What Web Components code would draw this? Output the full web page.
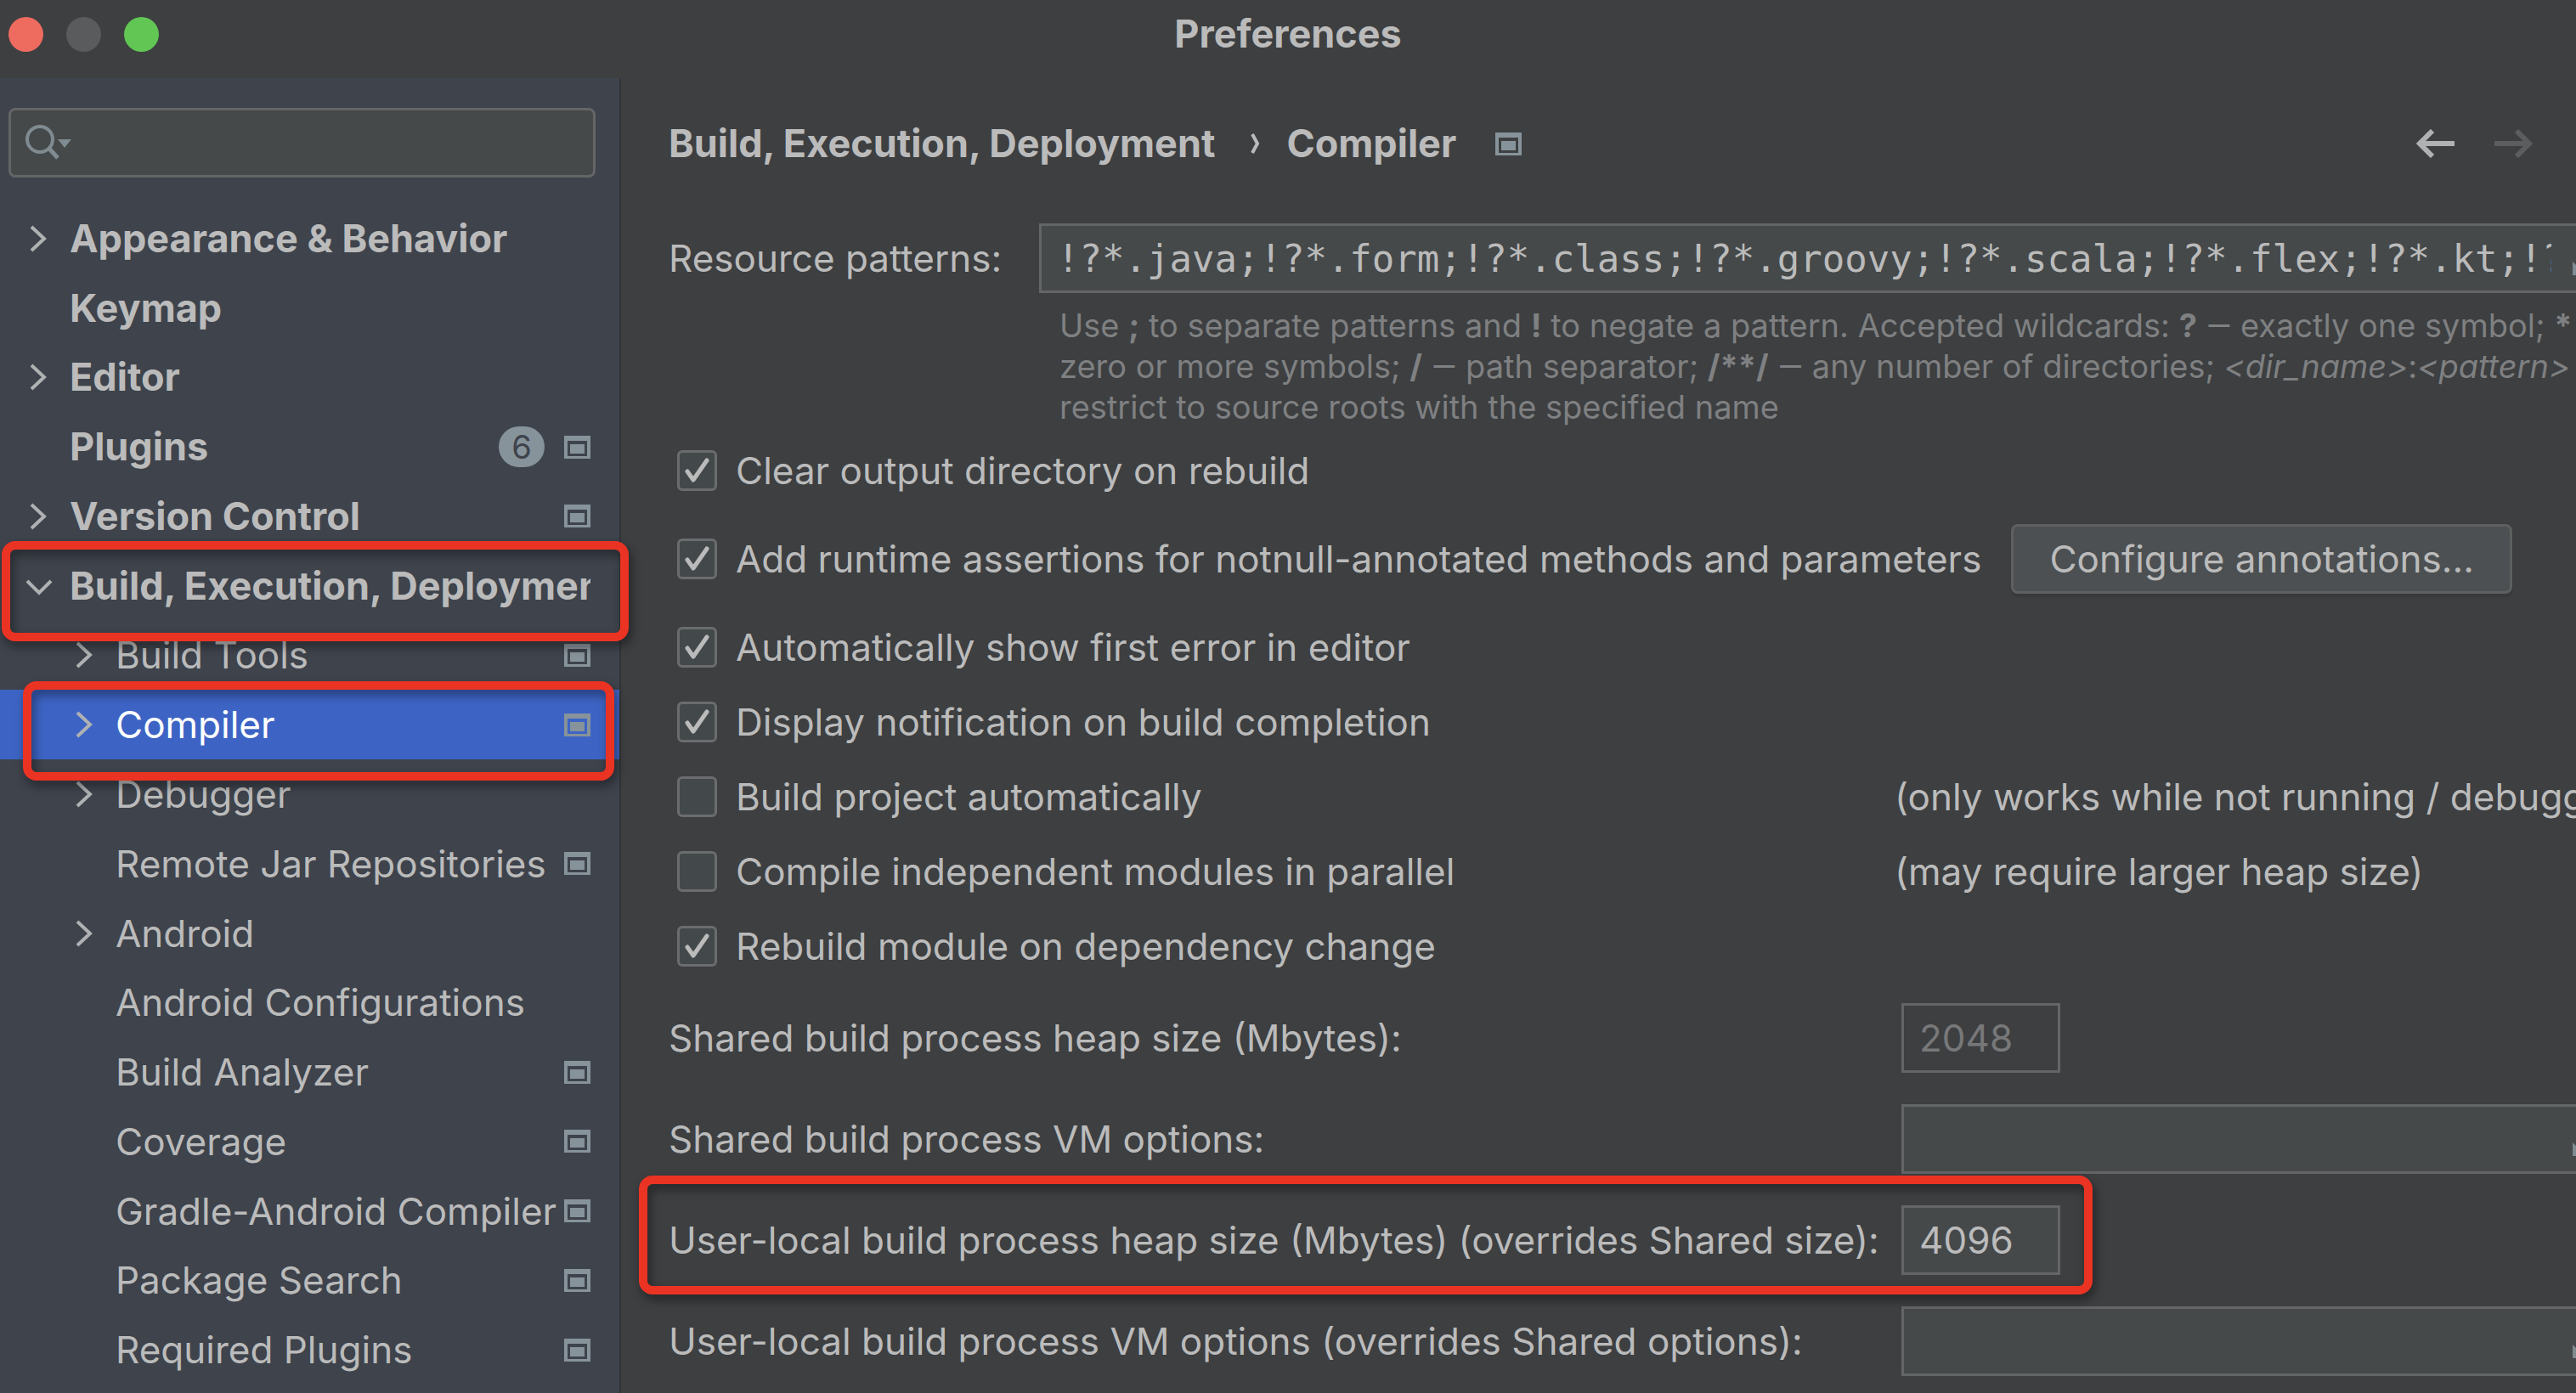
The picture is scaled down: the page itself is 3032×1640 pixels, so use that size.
<!DOCTYPE html>
<html lang="en">
<head>
<meta charset="utf-8">
<title>Preferences</title>
<style>
html, body { margin: 0; height: 100%; overflow: hidden; background: #3d3f41; }
body { font-family: Inter, "Noto Sans", sans-serif; font-size: 44px; line-height: 52px; color: #bbbbbb; }
.dash { font-family: Roboto, sans-serif; line-height: 0; }
</style>
</head>
<body>
<preferences-window>
  <title-bar slot="title">Preferences</title-bar>
  <settings-tree slot="sidebar">
    <tree-item arrow="closed" top>Appearance &amp; Behavior</tree-item>
    <tree-item top>Keymap</tree-item>
    <tree-item arrow="closed" top>Editor</tree-item>
    <tree-item top project badge="6">Plugins</tree-item>
    <tree-item arrow="closed" top project>Version Control</tree-item>
    <tree-item arrow="open" top>Build, Execution, Deployment<highlight-frame slot="frame" style="--inset: -12px -11px -24px 2px"></highlight-frame></tree-item>
    <tree-item arrow="closed" project>Build Tools</tree-item>
    <tree-item arrow="closed" project selected>Compiler<highlight-frame slot="frame" style="--inset: -10px 6px -25px 27px"></highlight-frame></tree-item>
    <tree-item arrow="closed">Debugger</tree-item>
    <tree-item project>Remote Jar Repositories</tree-item>
    <tree-item arrow="closed">Android</tree-item>
    <tree-item>Android Configurations</tree-item>
    <tree-item project>Build Analyzer</tree-item>
    <tree-item project>Coverage</tree-item>
    <tree-item project>Gradle-Android Compiler</tree-item>
    <tree-item project>Package Search</tree-item>
    <tree-item project>Required Plugins</tree-item>
  </settings-tree>
  <page-header>
    <span slot="group">Build, Execution, Deployment</span>
    <span slot="page">Compiler</span>
  </page-header>
  <pattern-field label="Resource patterns:" value="!?*.java;!?*.form;!?*.class;!?*.groovy;!?*.scala;!?*.flex;!?*.kt;!?">
    Use <b>;</b> to separate patterns and <b>!</b> to negate a pattern. Accepted wildcards: <b>?</b> <span class="dash">—</span> exactly one symbol; <b>*</b><br>
    zero or more symbols; <b>/</b> <span class="dash">—</span> path separator; <b>/**/</b> <span class="dash">—</span> any number of directories; <i>&lt;dir_name&gt;</i>:<i>&lt;pattern&gt;</i> <span class="dash">—</span><br>
    restrict to source roots with the specified name
  </pattern-field>
  <check-row label="Clear output directory on rebuild" checked></check-row>
  <check-row label="Add runtime assertions for notnull-annotated methods and parameters" action="Configure annotations..." checked></check-row>
  <check-row label="Automatically show first error in editor" checked></check-row>
  <check-row label="Display notification on build completion" checked></check-row>
  <check-row label="Build project automatically" note="(only works while not running / debugging)"></check-row>
  <check-row label="Compile independent modules in parallel" note="(may require larger heap size)"></check-row>
  <check-row label="Rebuild module on dependency change" checked></check-row>
  <option-group>
    <option-row label="Shared build process heap size (Mbytes):" value="2048" size="short" disabled></option-row>
    <option-row label="Shared build process VM options:"></option-row>
    <option-row label="User-local build process heap size (Mbytes) (overrides Shared size):" value="4096" size="short"><highlight-frame style="--inset: -16px auto -5px -35px; --frame-width: 1711px"></highlight-frame></option-row>
    <option-row label="User-local build process VM options (overrides Shared options):"></option-row>
  </option-group>
</preferences-window>

<script>
const define = (name, render) => customElements.define(name, class extends HTMLElement {
  connectedCallback() {
    if (this.shadowRoot) return;
    this.attachShadow({ mode: "open" }).innerHTML = "<style>:host,*{box-sizing:border-box}</style>" + render(this);
  }
});
const attr = (el, name) => (el.getAttribute(name) || "").replace(/&/g, "&amp;").replace(/"/g, "&quot;");

const fieldStyle = `
  .box { display: flex; align-items: center; height: 82px; border: 3px solid #646566; background: #45494a; }
  input { flex: 1; min-width: 0; width: 0; height: 100%; margin: 0; padding: 0 0 0 18px; border: 0; outline: 0; background: none; color: #bbbbbb; font: inherit; }
  .grow { flex: none; width: 34px; height: 40px; margin: 0 11px 0 25px; padding: 0; border: 0; background: none; color: #7f8b91; }
  .grow svg { display: block; }`;
const expandButton = `<button class="grow" aria-label="Expand"><svg width="34" height="40" viewBox="0 0 34 40" fill="currentColor"><path d="M0 24L16 40H0ZM18 0H34V16Z"/></svg></button>`;

define("preferences-window", () => `
<style>
  :host { display: flex; flex-direction: column; height: 100vh; overflow: hidden; }
  .body { display: flex; flex: 1; min-height: 0; }
  main { flex: 1; min-width: 0; padding-left: 56px; }
</style>
<slot name="title"></slot>
<div class="body"><slot name="sidebar"></slot><main><slot></slot></main></div>`);

define("title-bar", () => `
<style>
  :host { display: grid; grid-template-columns: 1fr auto 1fr; align-items: center; flex: none; height: 92px; padding: 0 10px 12px; font-size: 45px; font-weight: 700; }
  div { display: flex; gap: 27px; }
  button { width: 41px; height: 41px; padding: 0; border: 0; border-radius: 50%; }
  .close { background: #ee6b5f; } .min { background: #5a5b5d; } .zoom { background: #61c654; }
</style>
<div><button class="close" aria-label="Close"></button><button class="min" aria-label="Minimize" disabled></button><button class="zoom" aria-label="Zoom"></button></div>
<slot></slot>`);

define("settings-tree", () => `
<style>
  :host { display: flex; flex-direction: column; flex: none; width: 731px; border-right: 2px solid #333436; background: #3e434c; }
  label { display: flex; align-items: center; flex: none; height: 82px; margin: 35px 28px 31px 10px; padding-left: 16px; border: 3px solid #646566; border-radius: 8px; background: #45494a; }
  input { flex: 1; min-width: 0; border: 0; outline: 0; background: none; color: inherit; font: inherit; }
  nav { display: grid; grid-template-columns: minmax(0, 1fr); grid-auto-rows: 1fr; flex: 1; min-height: 0; padding-bottom: 10px; }
</style>
<label><svg width="58" height="44" viewBox="0 0 58 44" fill="none" stroke="#7f8b91" stroke-width="4"><circle cx="18" cy="18" r="15"/><path d="M29 29L39 40" stroke-width="5"/><path d="M39 18H55L47 28Z" fill="#7f8b91" stroke="none"/></svg><input type="text" aria-label="Search settings"></label>
<nav><slot></slot></nav>`);

define("project-icon", () => `
<style>:host { display: block; flex: none; } svg { display: block; }</style>
<svg width="31" height="27" viewBox="0 0 31 27" fill="#87939a"><path fill-rule="evenodd" d="M0 0H31V27H0ZM4 6V24H27V6Z"/><rect x="7" y="10" width="17" height="11"/></svg>`);

const arrows = {
  closed: `<path d="M9 12L24 26L9 40"/>`,
  open: `<path d="M4 20L18 34L32 20"/>`
};
define("tree-item", el => `
<style>
  :host { display: block; position: relative; min-height: 0; }
  a { display: flex; align-items: center; height: 100%; padding: 0 34px 0 82px; color: inherit; text-decoration: none; white-space: nowrap; }
  :host([top]) a { padding-left: 28px; font-size: 45px; font-weight: 700; }
  :host([selected]) a { background: #3d64c4; color: #ffffff; }
  .arrow { flex: none; width: 54px; height: 52px; }
  .text { flex: 1; min-width: 0; overflow: hidden; }
  .badge { flex: none; width: 54px; height: 48px; margin-right: 23px; border-radius: 24px; background: #87939a; color: #3e434c; font-size: 38px; line-height: 48px; font-weight: 400; text-align: center; }
</style>
<a href="#"><svg class="arrow" viewBox="0 0 54 52" fill="none" stroke="#afb1b3" stroke-width="4">${arrows[el.getAttribute("arrow")] || ""}</svg><span class="text"><slot></slot></span>${el.hasAttribute("badge") ? `<span class="badge">${attr(el, "badge")}</span>` : ""}${el.hasAttribute("project") ? "<project-icon></project-icon>" : ""}</a>
<slot name="frame"></slot>`);

define("highlight-frame", () => `
<style>:host { position: absolute; z-index: 2; inset: var(--inset); width: var(--frame-width, auto); border: 10px solid #eb3323; border-radius: 16px; filter: drop-shadow(3px 6px 6px rgba(0, 0, 0, .45)); pointer-events: none; }</style>`);

define("page-header", () => `
<style>
  :host { display: flex; align-items: center; height: 154px; padding-right: 51px; font-size: 45px; font-weight: 700; white-space: nowrap; }
  .sep { margin: 0 31px 0 42px; }
  project-icon { margin-left: 46px; }
  .nav { display: flex; gap: 47px; margin-left: auto; }
  button { width: 45px; height: 34px; padding: 0; border: 0; background: none; color: #afb1b3; }
  button:disabled { color: #5b5d5e; }
  svg { display: block; }
</style>
<slot name="group"></slot>
<svg class="sep" width="11" height="26" viewBox="0 0 11 26" fill="none" stroke="#bbbbbb" stroke-width="4"><path d="M2 2L8 13L2 24"/></svg>
<slot name="page"></slot><project-icon></project-icon>
<div class="nav">
<button aria-label="Back"><svg width="45" height="34" viewBox="0 0 45 34" fill="none" stroke="currentColor" stroke-width="6"><path d="M3 17H45M19 2L4 17L19 32"/></svg></button>
<button aria-label="Forward" disabled><svg width="45" height="34" viewBox="0 0 45 34" fill="none" stroke="currentColor" stroke-width="6"><path d="M0 17H42M26 2L41 17L26 32"/></svg></button>
</div>`);

define("pattern-field", el => `
<style>
  :host { display: grid; grid-template-columns: 436px minmax(0, 1fr); align-items: center; align-content: start; height: 247px; margin: 17px -44px 0 0; }
  ${fieldStyle}
  .box { font-family: "DejaVu Sans Mono", monospace; }
  .hint { grid-column: 2; padding: 14px 0 0 24px; font-size: 38px; line-height: 48px; color: #7f8081; white-space: nowrap; }
</style>
<label for="f">${attr(el, "label")}</label>
<div class="box"><input id="f" type="text" value="${attr(el, "value")}">${expandButton}</div>
<div class="hint"><slot></slot></div>`);

define("check-row", el => `
<style>
  :host { display: flex; align-items: center; height: 88px; white-space: nowrap; }
  :host([action]) { height: 120px; }
  label { display: flex; align-items: center; flex: none; gap: 22px; padding-left: 10px; }
  .mark { display: grid; width: 47px; height: 48px; }
  .mark > * { grid-area: 1 / 1; margin: 0; }
  input { appearance: none; width: 47px; height: 48px; border: 3px solid #6b6c6d; border-radius: 6px; background: #43494a; }
  svg { display: none; pointer-events: none; }
  input:checked + svg { display: block; }
  :host([note]) label { width: 1443px; }
  button { height: 82px; margin-left: 35px; padding: 0 42px; border: 3px solid #5e6060; border-radius: 8px; background: #4c5052; color: #bbbbbb; font: inherit; box-shadow: 0 4px 2px #383a3a; }
</style>
<label><span class="mark"><input type="checkbox"${el.hasAttribute("checked") ? " checked" : ""}><svg width="47" height="48" viewBox="0 0 47 48" fill="none" stroke="#bbbbbb" stroke-width="5" stroke-linecap="round" stroke-linejoin="round"><path d="M12 25L19 35L35 12"/></svg></span><span>${attr(el, "label")}</span></label>
${el.hasAttribute("note") ? `<span>${attr(el, "note")}</span>` : ""}${el.hasAttribute("action") ? `<button>${attr(el, "action")}</button>` : ""}`);

define("option-group", () => `
<style>:host { display: flex; flex-direction: column; padding-top: 4px; margin-right: -44px; }</style>
<slot></slot>`);

define("option-row", el => `
<style>
  :host { display: grid; position: relative; grid-template-columns: 1451px minmax(0, 1fr); align-items: center; height: 119px; white-space: nowrap; }
  ${fieldStyle}
  :host([size="short"]) .box { width: 187px; }
  :host([disabled]) .box { background: none; }
  :host([disabled]) input { color: #777879; }
</style>
<label for="f">${attr(el, "label")}</label>
<div class="box"><input id="f" type="text" value="${attr(el, "value")}"${el.hasAttribute("disabled") ? " disabled" : ""}>${el.getAttribute("size") === "short" ? "" : expandButton}</div>
<slot></slot>`);
</script>
</body>
</html>
